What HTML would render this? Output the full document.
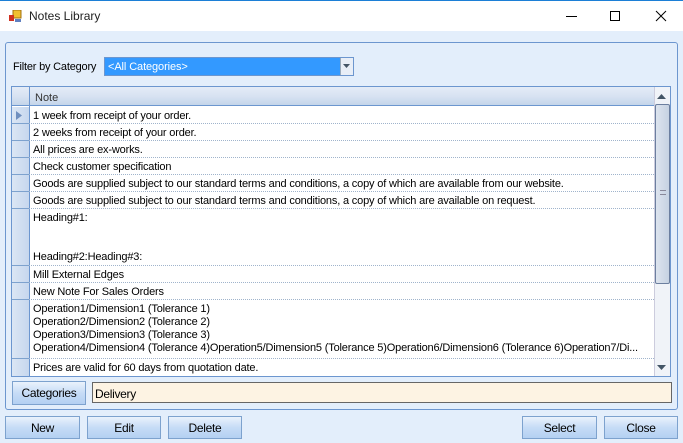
<!DOCTYPE html><html><head><style>
*{margin:0;padding:0;box-sizing:border-box}
body{width:683px;height:443px;background:#e3eefb;font-family:"Liberation Sans",sans-serif;font-size:11px;color:#000;position:relative;overflow:hidden}
.abs{position:absolute}
.title{left:0;top:0;width:683px;height:31px;background:#fff;border-top:1px solid #1c7fd6}
.btn{position:absolute;height:23px;border:1px solid #7da2ce;background:linear-gradient(#eaf2fc,#c6dcf6 50%,#b4d0f2);text-align:center;line-height:22px;font-size:12px;letter-spacing:-0.3px}
.row{position:absolute;left:29px;width:625px;border-bottom:1px dotted #a0b4cc;padding-left:4px;line-height:13px;white-space:nowrap;overflow:hidden;letter-spacing:-0.17px}
.sel{position:absolute;left:12px;width:17px;border-bottom:1px solid #7da2ce;background:linear-gradient(90deg,#dbe6f4,#c6d7ee)}
</style></head><body>
<div class="abs title">
 <svg class="abs" style="left:9px;top:9px" width="13" height="13"><rect x="4" y="0" width="8" height="8" fill="#f0c030" stroke="#a07010"/><rect x="0" y="5" width="5" height="6" fill="#d03020"/><rect x="6" y="9" width="6" height="3" fill="#6080c0"/></svg>
 <div class="abs" style="left:29px;top:8px;font-size:12px;color:#222">Notes Library</div>
 <div class="abs" style="left:566px;top:15px;width:11px;height:1px;background:#000"></div>
 <div class="abs" style="left:610px;top:10px;width:10px;height:10px;border:1px solid #000"></div>
 <svg class="abs" style="left:655px;top:9px" width="12" height="12"><path d="M1 1L11 11M11 1L1 11" stroke="#000" stroke-width="1"/></svg>
</div>
<div class="abs" style="left:5px;top:42px;width:673px;height:368px;border:1px solid #6c96cf;border-radius:3px"></div>
<div class="abs" style="left:13px;top:61px;letter-spacing:-0.2px">Filter by Category</div>
<div class="abs" style="left:104px;top:57px;width:250px;height:19px;border:1px solid #6c96cf;background:#3399ff;color:#fff;padding:3px 3px;letter-spacing:-0.1px">&lt;All Categories&gt;</div>
<div class="abs" style="left:340px;top:58px;width:13px;height:17px;background:#e8eef7;border-left:1px solid #9ab"></div>
<svg class="abs" style="left:343px;top:64px" width="7" height="4"><path d="M0 0H7L3.5 4Z" fill="#456"/></svg>
<div class="abs" style="left:11px;top:86px;width:660px;height:291px;border:1px solid #6c96cf;background:#fff"></div>
<div class="abs" style="left:12px;top:87px;width:642px;height:19px;background:linear-gradient(#e4ecf7,#d8e3f2 50%,#c4d5ea);border-bottom:1px solid #6c96cf"></div>
<div class="abs" style="left:29px;top:87px;width:1px;height:289px;background:#6c96cf"></div>
<div class="abs" style="left:35px;top:92px;color:#333">Note</div>
<div class="abs" style="left:654px;top:87px;width:16px;height:289px;background:#f0f3f8;border-left:1px solid #ccd"></div>
<svg class="abs" style="left:657px;top:94px" width="9" height="5"><path d="M0 5H9L4.5 0Z" fill="#456"/></svg>
<svg class="abs" style="left:657px;top:365px" width="9" height="5"><path d="M0 0H9L4.5 5Z" fill="#456"/></svg>
<div class="abs" style="left:655px;top:104px;width:15px;height:180px;border:1px solid #6c7f9f;border-radius:2px;background:linear-gradient(90deg,#dde4ee,#c6d2e2)"></div>
<div class="abs" style="left:660px;top:190px;width:6px;height:5px;border-top:1px solid #889;border-bottom:1px solid #889"></div>

<div class="sel" style="top:107px;height:17px"></div><svg class="abs" style="left:16px;top:111px" width="6" height="9"><path d="M0 0L6 4.5L0 9Z" fill="#6f8fbf"/></svg>
<div class="row" style="top:107px;height:17px;padding-top:3px">1 week from receipt of your order.</div>
<div class="sel" style="top:124px;height:17px"></div><div class="row" style="top:124px;height:17px;padding-top:3px">2 weeks from receipt of your order.</div>
<div class="sel" style="top:141px;height:17px"></div><div class="row" style="top:141px;height:17px;padding-top:3px">All prices are ex-works.</div>
<div class="sel" style="top:158px;height:17px"></div><div class="row" style="top:158px;height:17px;padding-top:3px">Check customer specification</div>
<div class="sel" style="top:175px;height:17px"></div><div class="row" style="top:175px;height:17px;padding-top:3px">Goods are supplied subject to our standard terms and conditions, a copy of which are available from our website.</div>
<div class="sel" style="top:192px;height:17px"></div><div class="row" style="top:192px;height:17px;padding-top:3px">Goods are supplied subject to our standard terms and conditions, a copy of which are available on request.</div>
<div class="sel" style="top:209px;height:57px"></div><div class="row" style="top:209px;height:57px;padding-top:3px">Heading#1:<br><br><br>Heading#2:Heading#3:</div>
<div class="sel" style="top:266px;height:17px"></div><div class="row" style="top:266px;height:17px;padding-top:3px">Mill External Edges</div>
<div class="sel" style="top:283px;height:17px"></div><div class="row" style="top:283px;height:17px;padding-top:3px">New Note For Sales Orders</div>
<div class="sel" style="top:300px;height:59px"></div><div class="row" style="top:300px;height:59px;padding-top:3px">Operation1/Dimension1 (Tolerance 1)<br>Operation2/Dimension2 (Tolerance 2)<br>Operation3/Dimension3 (Tolerance 3)<br>Operation4/Dimension4 (Tolerance 4)Operation5/Dimension5 (Tolerance 5)Operation6/Dimension6 (Tolerance 6)Operation7/Di...</div>
<div class="sel" style="top:359px;height:17px;border:none"></div><div class="row" style="top:359px;height:17px;padding-top:3px;border:none">Prices are valid for 60 days from quotation date.</div>

<div class="btn" style="left:12px;top:381px;width:74px;height:24px;line-height:23px">Categories</div>
<div class="abs" style="left:92px;top:382px;width:580px;height:21px;border:1px solid #666;background:#fdf3e3;padding:4px 2px;font-size:12px;letter-spacing:-0.3px">Delivery</div>
<div class="btn" style="left:5px;top:416px;width:75px">New</div>
<div class="btn" style="left:87px;top:416px;width:74px">Edit</div>
<div class="btn" style="left:168px;top:416px;width:74px">Delete</div>
<div class="btn" style="left:522px;top:416px;width:75px">Select</div>
<div class="btn" style="left:604px;top:416px;width:74px">Close</div>
</body></html>
